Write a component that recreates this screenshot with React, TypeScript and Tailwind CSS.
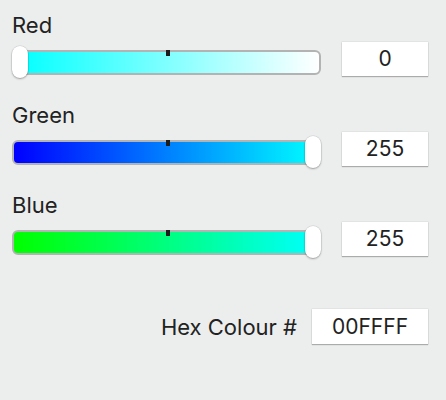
import React from "react";

type SliderProps = { label: string; value: number; gradient: string };

function SliderRow({ label, value, gradient }: SliderProps) {
  const knobLeft = (value / 255) * (309 - 16);
  return (
    <div className="flex flex-col">
      <div className="text-[22px] leading-[24px] text-[#222]">{label}</div>
      <div className="mt-[5px] flex items-start">
        <div className="relative mt-[8px] h-[25px] w-[309px]">
          <div
            className="h-full w-full rounded-[6px] border-2 border-[#b3b3b3]"
            style={{ backgroundImage: gradient }}
          />
          <div className="absolute left-[154px] top-0 h-[6px] w-[4px] bg-[#1c1c1c]" />
          <div
            className="absolute top-[-4px] h-[32px] w-[16px] rounded-full bg-white shadow-[0_0_0_0.5px_rgba(0,0,0,0.12),0_1px_2px_rgba(0,0,0,0.3)]"
            style={{ left: knobLeft }}
          />
        </div>
        <div className="ml-[21px] flex h-[34px] w-[86px] items-center justify-center bg-white text-[21px] text-[#222] shadow-[0_0_0_0.5px_rgba(0,0,0,0.08),0_1px_1px_rgba(0,0,0,0.25)]">
          {value}
        </div>
      </div>
    </div>
  );
}

export default function App() {
  return (
    <div
      className="h-[400px] w-[446px] bg-[#eceeed] pl-[12px] pt-[13px]"
      style={{ fontFamily: "Inter, 'Liberation Sans', sans-serif" }}
    >
      <div className="flex flex-col gap-[27px]">
        <SliderRow
          label="Red"
          value={0}
          gradient="linear-gradient(to right, #00ffff, #ffffff)"
        />
        <SliderRow
          label="Green"
          value={255}
          gradient="linear-gradient(to right, #0000ff, #00ffff)"
        />
        <SliderRow
          label="Blue"
          value={255}
          gradient="linear-gradient(to right, #00ff00, #00ffff)"
        />
      </div>
      <div className="mt-[53px] flex items-center justify-end pr-[18px]">
        <div className="text-[22px] leading-[24px] text-[#222]">Hex Colour #</div>
        <div className="ml-[15px] flex h-[35px] w-[116px] items-center justify-center bg-white text-[21px] text-[#222] shadow-[0_0_0_0.5px_rgba(0,0,0,0.08),0_1px_1px_rgba(0,0,0,0.25)]">
          00FFFF
        </div>
      </div>
    </div>
  );
}
